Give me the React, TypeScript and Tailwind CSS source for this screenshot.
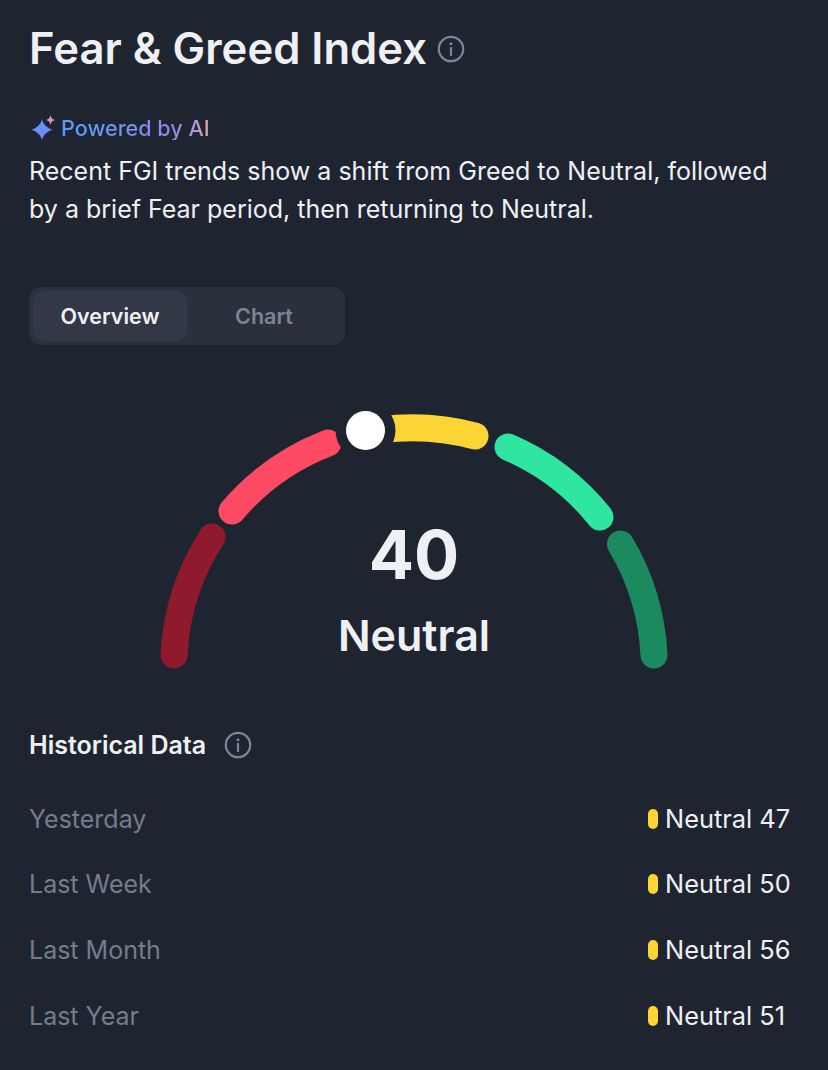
const rows = [
  { label: "Yesterday", value: "Neutral 47" },
  { label: "Last Week", value: "Neutral 50" },
  { label: "Last Month", value: "Neutral 56" },
  { label: "Last Year", value: "Neutral 51" },
];

const InfoIcon = () => (
  <svg width="28" height="28" viewBox="0 0 28 28" fill="none" className="shrink-0">
    <circle cx="14" cy="14" r="12.2" stroke="#7d8493" strokeWidth="2.2" />
    <circle cx="14" cy="8.8" r="1.5" fill="#7d8493" />
    <rect x="12.9" y="12" width="2.2" height="9" rx="1" fill="#7d8493" />
  </svg>
);

const Sparkle = () => (
  <svg width="26" height="26" viewBox="0 0 26 26" className="shrink-0">
    <defs>
      <linearGradient id="spark" x1="0" y1="1" x2="1" y2="0">
        <stop offset="0" stopColor="#b48fe0" />
        <stop offset="1" stopColor="#f3a27e" />
      </linearGradient>
      <linearGradient id="sparkMain" x1="0" y1="0" x2="1" y2="1">
        <stop offset="0" stopColor="#5b9dff" />
        <stop offset="1" stopColor="#7f7cf2" />
      </linearGradient>
    </defs>
    <path d="M13 4.5 C14.5 9.5 17.5 12.5 23.5 14.8 C17.5 17 14.5 20 13 25 C11.5 20 8.5 17 2.5 14.8 C8.5 12.5 11.5 9.5 13 4.5 Z" fill="url(#sparkMain)" />
    <path d="M21.5 0 C22 2.8 23 3.9 26 5 C23 6.1 22 7.2 21.5 10 C21 7.2 20 6.1 17 5 C20 3.9 21 2.8 21.5 0 Z" fill="url(#spark)" />
  </svg>
);

const Gauge = () => (
  <div className="relative mx-auto mt-[60px] h-[270px] w-[540px]">
    <svg width="540" height="270" viewBox="144 405 540 270" fill="none">
      <g strokeWidth="27" strokeLinecap="round">
        <path d="M174 655 A240 240 0 0 1 212 537" stroke="#8f1a2d" />
        <path d="M232 511 A240 240 0 0 1 328 443" stroke="#ff4a63" />
        <path d="M380 430 A240 240 0 0 1 475 436" stroke="#fcd535" />
        <path d="M508 447 A240 240 0 0 1 600 517" stroke="#2fe6a0" />
        <path d="M620.5 544 A240 240 0 0 1 654 655" stroke="#1c8a5f" />
      </g>
      <circle cx="365.5" cy="430.5" r="30" fill="#1f2530" />
      <circle cx="365.5" cy="430.5" r="19.5" fill="#ffffff" />
    </svg>
    <div className="absolute inset-x-0 top-[110px] flex flex-col items-center text-[#eef0f3]">
      <span className="text-[67px] leading-[80px] font-bold">40</span>
      <span className="text-[43px] leading-[80px] font-semibold">Neutral</span>
    </div>
  </div>
);

export default function App() {
  return (
    <div className="h-[1070px] overflow-hidden bg-[#1f2530] pt-[21px] pl-[29px] font-['Inter',sans-serif]">
      <div className="flex items-center gap-[10px]">
        <h1 className="text-[43.6px] leading-[56px] font-semibold text-[#eef0f3]">Fear &amp; Greed Index</h1>
        <InfoIcon />
      </div>

      <div className="mt-[39px] flex h-[24px] items-center gap-[6px]">
        <Sparkle />
        <span className="bg-[linear-gradient(90deg,#5b9dff_0%,#6d93f5_40%,#8f88e2_75%,#b49ad6_92%,#f3a27e_100%)] bg-clip-text text-[21.6px] leading-[24px] font-medium text-transparent">
          Powered by AI
        </span>
      </div>

      <p className="mt-[12px] w-[760px] text-[25px] leading-[38px] text-[#eef0f3]">
        Recent FGI trends show a shift from Greed to Neutral, followed by a brief Fear period, then returning to Neutral.
      </p>

      <div className="mt-[59px] flex h-[58px] w-[316px] items-center rounded-[12px] bg-[#2a303c] p-[4px]">
        <div className="flex h-[50px] w-[154px] items-center justify-center rounded-[10px] bg-[#323846] text-[21.5px] font-semibold text-[#eef0f3]">
          Overview
        </div>
        <div className="flex h-[50px] flex-1 items-center justify-center text-[21.5px] font-semibold text-[#7d8493]">
          Chart
        </div>
      </div>

      <div className="-ml-[29px]">
        <Gauge />
      </div>

      <div className="mt-[54px] flex h-[32px] items-center gap-[18px]">
        <h2 className="text-[25px] leading-[32px] font-semibold text-[#eef0f3]">Historical Data</h2>
        <InfoIcon />
      </div>

      <div className="mt-[25px] pr-[29px]">
        {rows.map((row) => (
          <div key={row.label} className="flex h-[65.67px] items-center justify-between">
            <span className="text-[25px] leading-[32px] text-[#757c8a]">{row.label}</span>
            <div className="flex w-[151px] items-center gap-[7px]">
              <span className="h-[20px] w-[10px] rounded-full bg-[#fcd535]" />
              <span className="text-[25.4px] leading-[32px] whitespace-nowrap text-[#eef0f3]">{row.value}</span>
            </div>
          </div>
        ))}
      </div>
    </div>
  );
}
